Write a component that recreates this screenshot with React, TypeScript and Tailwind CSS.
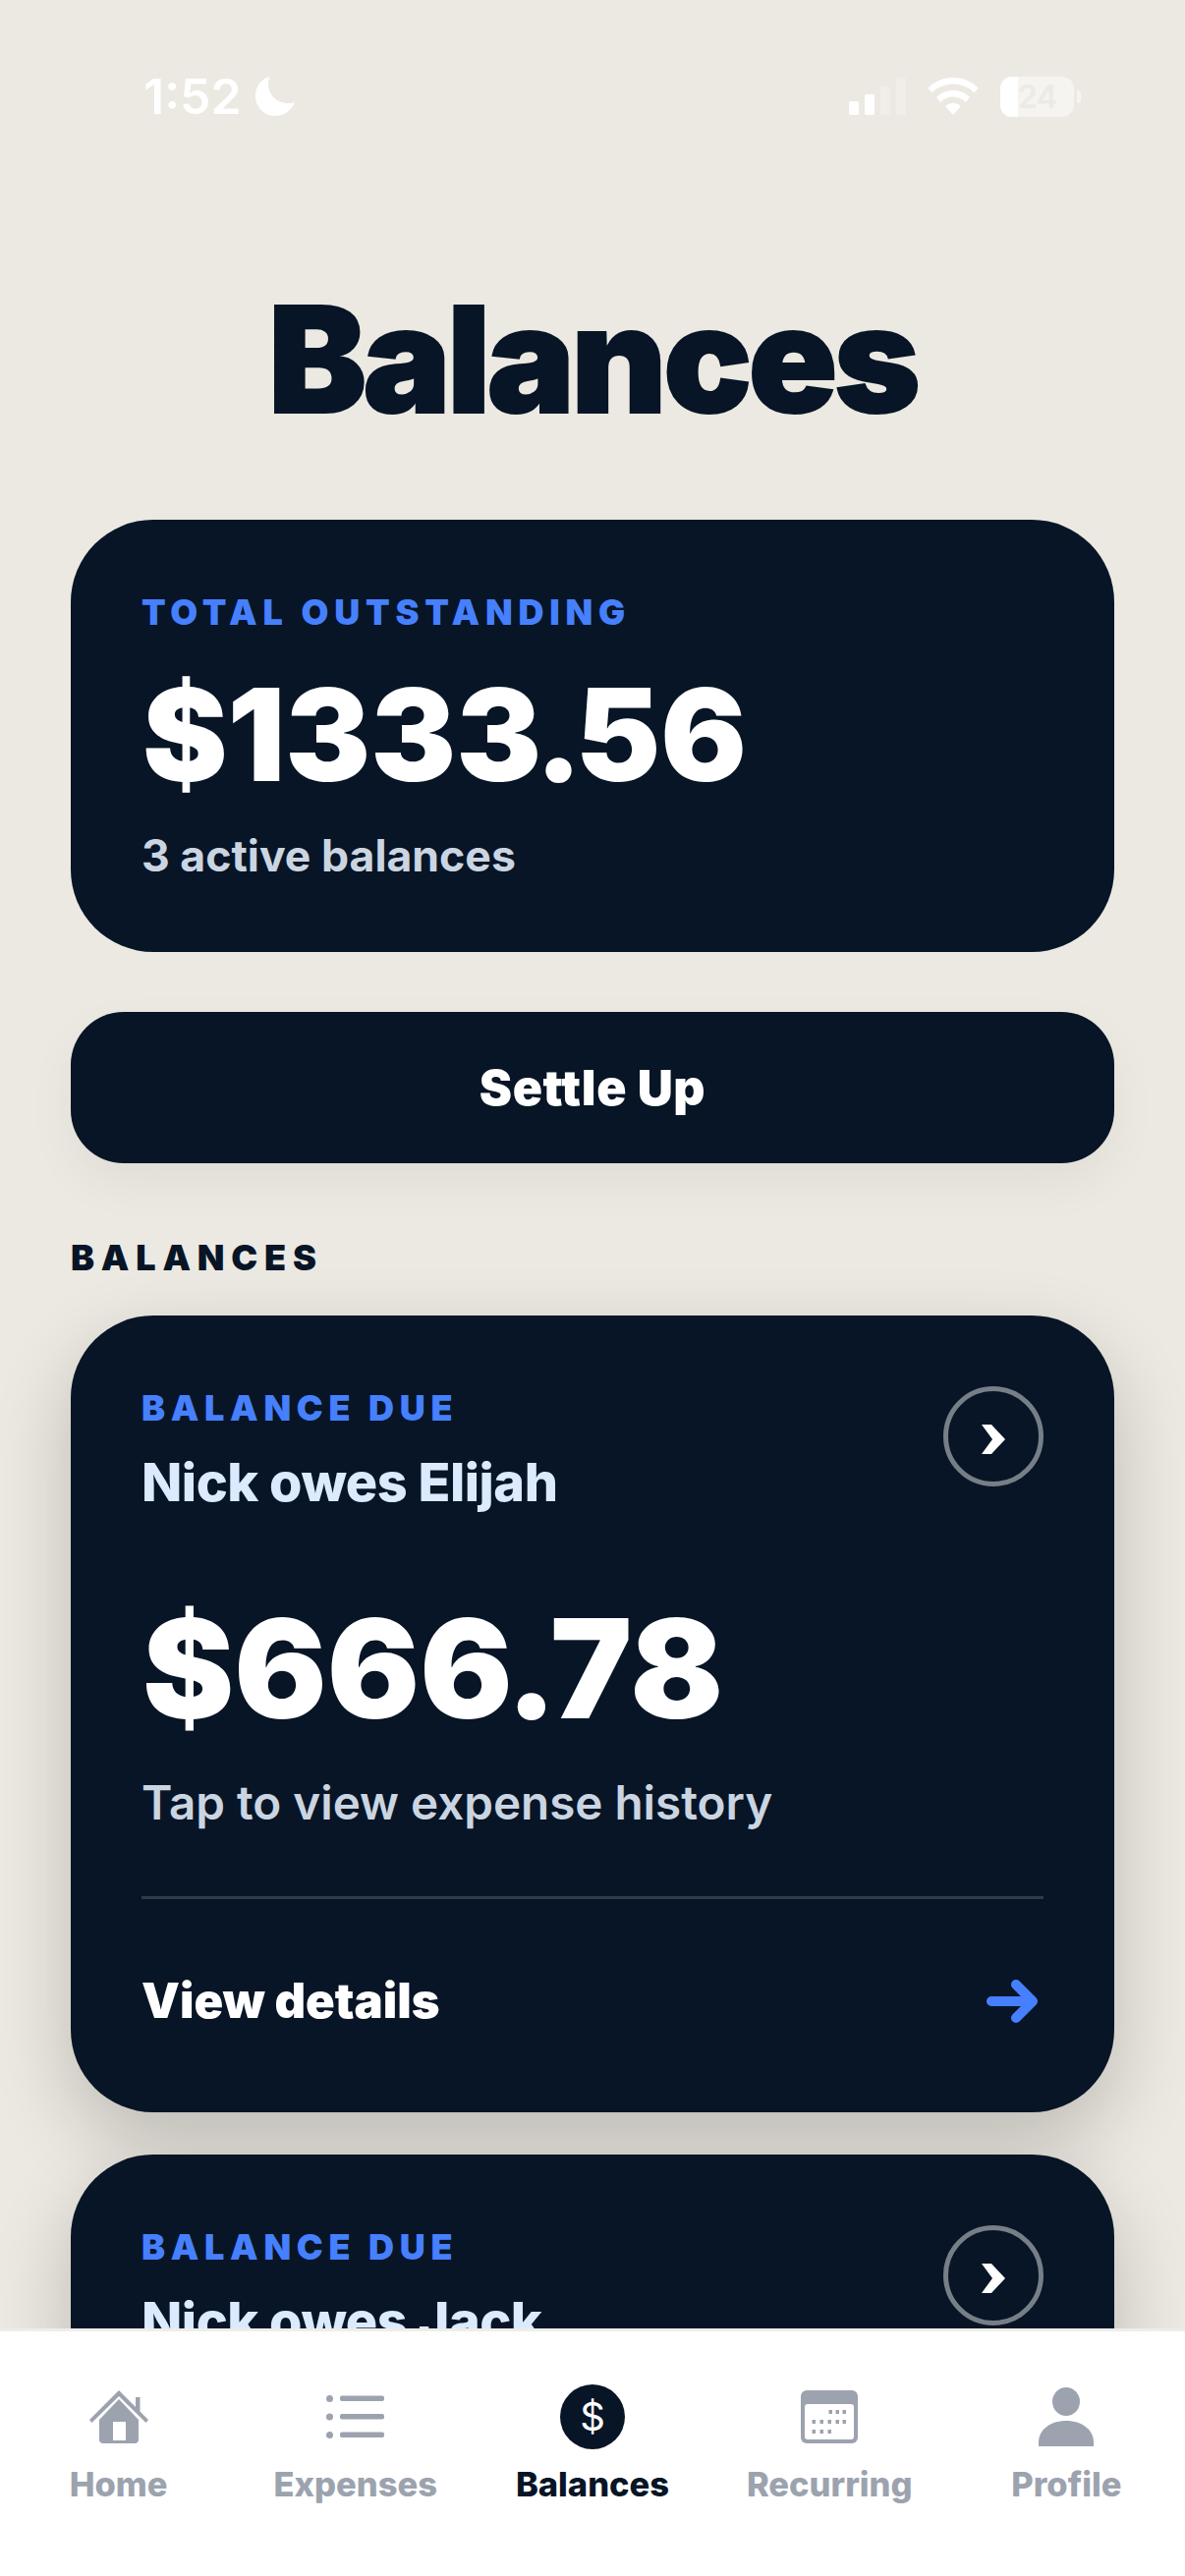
import React from 'react';

const font = { fontFamily: 'Inter, "Noto Sans", sans-serif' };

// status bar glyphs
function Moon() {
  return (
    <svg width="42" height="42" viewBox="0 0 42 42" className="ml-[13px]">
      <path d="M15.5 1C8 2.8 1 9.8 1 20.5 1 32 10 41 21 41c9.2 0 16.8-5.6 20-14-2 .8-4.6 1.2-7 1.2C23.500 28.200 14 19.500 14 9c0-3 .5-5.500 1.500-8z" fill="#fff" />
    </svg>
  );
}

function Signal() {
  return (
    <div className="flex items-end gap-[6px] h-[38px]">
      <div className="w-[10px] h-[14px] rounded-[2px] bg-white" />
      <div className="w-[10px] h-[21px] rounded-[2px] bg-white" />
      <div className="w-[10px] h-[29px] rounded-[2px] bg-white/25" />
      <div className="w-[10px] h-[38px] rounded-[2px] bg-white/25" />
    </div>
  );
}

function Wifi() {
  return (
    <svg width="52" height="38" viewBox="0 0 52 38" fill="#fff">
      <path d="M26 0C16 0 7 4 0.500 10.500l4 5C10 10 17.500 6.500 26 6.500S42 10 47.500 15.500l4-5C45 4 36 0 26 0z" />
      <path d="M26 13c-6.500 0-12.500 2.600-17 7l4 5c3.300-3.300 8-5.400 13-5.400s9.700 2.100 13 5.400l4-5c-4.500-4.400-10.500-7-17-7z" />
      <path d="M26 26c-3 0-5.700 1.200-7.800 3.200L26 38l7.800-8.800C31.700 27.200 29 26 26 26z" />
    </svg>
  );
}

function Battery() {
  return (
    <div className="flex items-center">
      <div className="w-[75px] h-[41px] rounded-[12px] bg-white/50 overflow-hidden relative flex items-center justify-center">
        <div className="absolute left-0 top-0 bottom-0 w-[18px] bg-white" />
        <span className="relative text-[33px] font-semibold text-[#ece9e2]/90 leading-none tracking-[-1px]">24</span>
      </div>
      <div className="ml-[3px] w-[4px] h-[13px] rounded-r-[3px] bg-white/50" />
    </div>
  );
}

function HomeIcon() {
  return (
    <svg width="60" height="54" viewBox="0 0 60 54" fill="#9ca3af">
      <path d="M30 9 10 30v20a4 4 0 0 0 4 4h32a4 4 0 0 0 4-4V30L30 9z" />
      <path d="M30 0 0 30l2.500 3L30 6l27.500 27 2.500-3-8.500-8.500V7h-4.500v10L30 0z" />
      <rect x="24" y="32" width="13" height="19" fill="#fff" />
    </svg>
  );
}

function ListIcon() {
  return (
    <svg width="60" height="44" viewBox="0 0 60 44" fill="#9ca3af">
      <circle cx="3.500" cy="3.500" r="3.500" />
      <circle cx="3.500" cy="22" r="3.500" />
      <circle cx="3.500" cy="40.500" r="3.500" />
      <rect x="14" y="0.500" width="45" height="5.500" rx="2" />
      <rect x="14" y="19" width="45" height="5.500" rx="2" />
      <rect x="14" y="37.500" width="45" height="5.500" rx="2" />
    </svg>
  );
}

function CalendarIcon() {
  const rows = [
    [30, 37, 44],
    [13, 21, 29, 37, 44],
    [13, 21, 29],
  ];
  return (
    <svg width="58" height="54" viewBox="0 0 58 54">
      <rect width="58" height="54" rx="6" fill="#9ca3af" />
      <rect x="4" y="14" width="50" height="36" rx="3" fill="#fff" />
      {rows.map((xs, r) =>
        xs.map((x) => <rect key={`${r}-${x}`} x={x - 1.500} y={20 + r * 10} width="3.500" height="4" fill="#9ca3af" />)
      )}
    </svg>
  );
}

function PersonIcon() {
  return (
    <svg width="56" height="60" viewBox="0 0 56 60" fill="#9ca3af">
      <ellipse cx="28" cy="14.500" rx="14" ry="14.500" />
      <path d="M0 60v-4C0 43 12 34 28 34s28 9 28 22v4H0z" />
    </svg>
  );
}

function Chevron() {
  return (
    <svg width="24" height="30" viewBox="0 0 24 30" fill="#fff" className="mt-[6px]">
      <path d="M0 0h10l14 15-14 15H0l11-15z" />
    </svg>
  );
}

function ArrowRight() {
  return (
    <svg width="52" height="44" viewBox="0 0 52 44" fill="none" stroke="#4680ff" strokeWidth="10" strokeLinecap="round" strokeLinejoin="round" className="mr-[6px]">
      <path d="M5 22h41M30 5l17 17-17 17" />
    </svg>
  );
}

// the period sits much closer to the digits than Inter spaces it
function Money({ value }: { value: string }) {
  const [whole, cents] = value.split('.');
  return (
    <>
      {whole}
      <span className="-mx-[7px]">.</span>
      {cents}
    </>
  );
}

function BalanceCard({ name, amount }: { name: string; amount: string }) {
  return (
    <div className="shrink-0 h-[811px] rounded-[84px] bg-[#071526] px-[72px] pt-[72px] shadow-[0_30px_80px_rgba(0,0,0,0.2)]">
      <div className="flex items-start justify-between">
        <div>
          <div className="mt-[2px] text-[36px] leading-[40px] font-black tracking-[5.700px] text-[#4680ff]">BALANCE DUE</div>
          <div className="mt-[22px] text-[54px] leading-[68px] font-extrabold tracking-[-0.5px] text-[#dbeafe]">{name}</div>
        </div>
        <div className="w-[102px] h-[102px] rounded-full border-[5px] border-white/45 flex items-center justify-center">
          <Chevron />
        </div>
      </div>
      <div className="mt-[80px] pl-[1px] text-[140px] leading-[150px] font-black text-white">
        <Money value={amount} />
      </div>
      <div className="mt-[32px] text-[47.6px] leading-[60px] font-semibold text-[#cbd5e1]">Tap to view expense history</div>
      <div className="mt-[65px] h-[3px] bg-[#2f3b49]" />
      <div className="flex items-center justify-between h-[208px]">
        <span className="text-[49px] font-black text-white">View details</span>
        <ArrowRight />
      </div>
    </div>
  );
}

function Tab({ label, active, children }: { label: string; active?: boolean; children: React.ReactNode }) {
  return (
    <div className="flex-1 flex flex-col items-center">
      <div className="h-[66px] flex items-center justify-center">{children}</div>
      <span className={`mt-[16px] text-[34.5px] leading-[40px] font-extrabold ${active ? 'text-[#071526]' : 'text-[#9ca3af]'}`}>{label}</span>
    </div>
  );
}

export default function App() {
  return (
    <div className="w-[1206px] h-[2622px] bg-[#ece9e2] flex flex-col overflow-hidden" style={font}>
      {/* status bar */}
      <div className="shrink-0 flex items-center justify-between pl-[146px] pr-[106px] pt-[76px] h-[120px]">
        <div className="flex items-center">
          <span className="text-[50px] leading-[42px] font-semibold text-white">1:52</span>
          <Moon />
        </div>
        <div className="flex items-center gap-[22px]">
          <Signal />
          <Wifi />
          <Battery />
        </div>
      </div>

      <main className="flex-1 min-h-0 overflow-hidden px-[72px]">
        <h1 className="mt-[166px] text-center text-[150px] leading-[160px] font-black tracking-[-3.800px] text-[#071526] [-webkit-text-stroke:2px_#071526]">Balances</h1>

        <div className="mt-[83px] h-[440px] rounded-[84px] bg-[#071526] px-[72px] pt-[74px]">
          <div className="text-[36px] leading-[40px] font-black tracking-[5.800px] text-[#4680ff]">TOTAL OUTSTANDING</div>
          <div className="mt-[40px] pl-[1px] text-[130px] leading-[130px] font-black text-white">
            <Money value="$1333.56" />
          </div>
          <div className="mt-[28px] text-[44.6px] leading-[60px] font-bold text-[#cbd5e1]">3 active balances</div>
        </div>

        <div className="mt-[61px] h-[154px] rounded-[54px] bg-[#071526] flex items-center justify-center shadow-[0_20px_50px_rgba(0,0,0,0.05)]">
          <span className="text-[50px] font-black tracking-[0.600px] text-white">Settle Up</span>
        </div>

        <div className="mt-[76px] text-[36px] leading-[40px] font-black tracking-[6.800px] text-[#071526]">BALANCES</div>

        <div className="mt-[39px] flex flex-col gap-[43px]">
          <BalanceCard name="Nick owes Elijah" amount="$666.78" />
          <BalanceCard name="Nick owes Jack" amount="$666.78" />
        </div>
      </main>

      {/* bottom tabs */}
      <nav className="shrink-0 h-[252px] bg-white border-t-[3px] border-[#efede8] flex px-0 pt-[54px]">
        <Tab label="Home"><HomeIcon /></Tab>
        <Tab label="Expenses"><ListIcon /></Tab>
        <Tab label="Balances" active>
          <div className="w-[66px] h-[66px] rounded-full bg-[#071526] flex items-center justify-center text-white text-[40px] font-normal leading-none">$</div>
        </Tab>
        <Tab label="Recurring"><CalendarIcon /></Tab>
        <Tab label="Profile"><PersonIcon /></Tab>
      </nav>
    </div>
  );
}
